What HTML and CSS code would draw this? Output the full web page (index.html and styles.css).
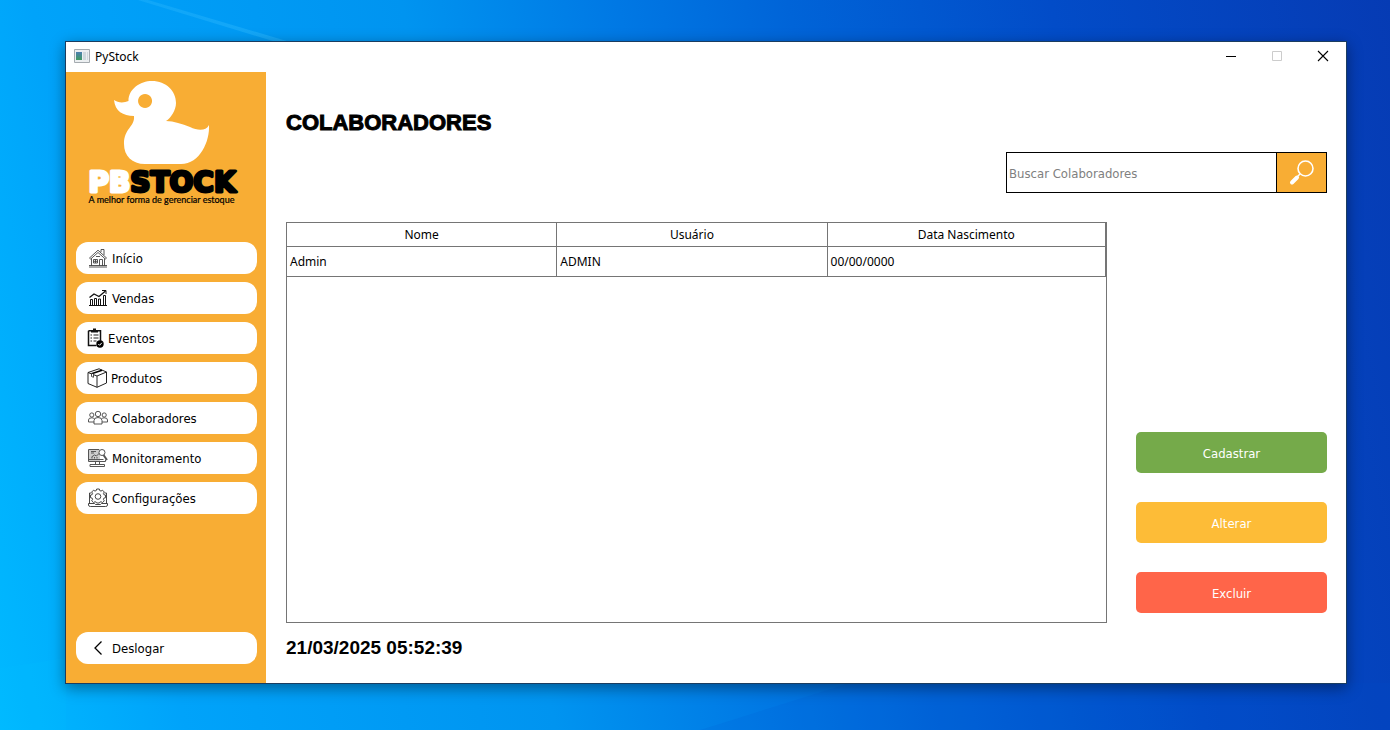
FILE: index.html
```html
<!DOCTYPE html>
<html lang="pt-BR">
<head>
<meta charset="utf-8">
<title>PyStock</title>
<link rel="stylesheet" href="styles.css">
</head>
<body class="desktop">
<svg class="wallpaper" viewBox="0 0 1390 730" preserveAspectRatio="none" aria-hidden="true">
  <defs>
    <linearGradient id="beam" x1="0" y1="0" x2="1" y2="0"><stop offset="0" stop-color="#3cc0ff" stop-opacity=".25"/><stop offset="1" stop-color="#3cc0ff" stop-opacity=".35"/></linearGradient>
  </defs>
  <path d="M138 0H148L290 42H276Z" fill="url(#beam)"/>
  <path d="M0 730V668L66 658V730Z" fill="#00c0ff" opacity=".2"/>
  <path d="M700 730L850 683H1390V730Z" fill="#0050d0" opacity=".12"/>
</svg>
<div class="window">
  <header class="titlebar">
    <svg class="app-icon" viewBox="0 0 16 14" aria-hidden="true"><defs><linearGradient id="app" x1="0" y1="0" x2="0" y2="1"><stop offset="0" stop-color="#4c7fb0"/><stop offset="1" stop-color="#3f9b62"/></linearGradient></defs><path d="M.5.5h15v13H.5z" fill="#eceff1" stroke="#a5abb0"/><path d="M2 3h6v8H2z" fill="url(#app)"/><path d="M9 3h3v8H9zM13 3h1v8h-1z" fill="#cfd8dd"/></svg>
    <span class="app-name">PyStock</span>
    <button class="win-btn" type="button" aria-label="Minimizar"><svg viewBox="0 0 12 12"><path d="M1 6.500h10" stroke="#000"/></svg></button>
    <button class="win-btn" type="button" aria-label="Maximizar" disabled><svg viewBox="0 0 12 12"><path d="M1.500 1.500h9v9h-9z" fill="none" stroke="#ccc"/></svg></button>
    <button class="win-btn" type="button" aria-label="Fechar"><svg viewBox="0 0 12 12"><path d="M1 1l10 10M11 1L1 11" stroke="#000" stroke-width="1.100"/></svg></button>
  </header>
  <div class="app">
    <aside class="sidebar">
      <div class="brand">
        <svg class="duck" viewBox="0 0 96 84" aria-hidden="true"><path fill="#fff" fill-rule="evenodd" d="M0 19C4 22 10 22 14.500 20C14.500 8 26 0 38 0C52 0 62 10 62 22C62 29 57 37 52 40C60 40 68 43 76 46C84 50 92 50 95 44C96 60 86 83 67 83L31 83C18 83 10 75 10 63C10 47 21 46 20 35C9 35 1 30 0 19ZM31 13a7 7 0 1 0 .1 0Z"/></svg>
        <svg class="wordmark" viewBox="0 0 156 30"><text class="wordmark-text" x="78" y="27" text-anchor="middle"><tspan class="wordmark-light">PB</tspan>STOCK</text></svg>
        <div class="tagline">A melhor forma de gerenciar estoque</div>
      </div>
      <nav class="menu">
        <button class="menu-item" type="button"><svg class="icon" viewBox="0 0 20 20"><g fill="none" stroke="#444" stroke-width=".9"><path d="M1.500 10L10 2.200l8.500 7.800-1.200 1L10 4.500 2.700 11zM3.500 10.500v7.500M16.500 10.500v7.500M13 4V1.500h3V7M1 17.500h18M1 19h18M11.500 18v-6.500h3V18M5.500 11.500h4v3.500h-4zM7.500 11.500V15M5.500 13.300h4M8 8.500h4"/></g></svg>Início</button>
        <button class="menu-item" type="button"><svg class="icon" viewBox="0 0 20 20"><g fill="none" stroke="#111"><path d="M1 17.500h18M2.500 17v-5.500h2V17M6.500 17v-6.500h2V17M10.500 17v-6h2v6M15.500 17V7.500h2V17"/><path d="M1.500 9.500L6 6l5 2.500 6.500-5.500" stroke-width="1.300"/><path d="M14 2.500h4V6"/></g></svg>Vendas</button>
        <button class="menu-item menu-item-small" type="button"><svg class="icon icon-clip" viewBox="0 0 17 20"><path d="M1.500 2.800h12v10M1.500 2.800v14.700h8" fill="none" stroke="#111" stroke-width="1.500"/><path d="M4 4.500V2h2V.5h3V2h2v2.500z" fill="#111"/><path d="M3.500 7h1.500M6.500 7h5M3.500 10h1.500M6.500 10h5M3.500 13h1.500M6.500 13h3" stroke="#222"/><circle cx="13" cy="16" r="3.700" fill="#000"/><path d="M11.300 16l1.300 1.300 2.200-2.500" fill="none" stroke="#fff"/></svg>Eventos</button>
        <button class="menu-item menu-item-box" type="button"><svg class="icon" viewBox="0 0 20 20"><path d="M1 4.500L12 .8l7.500 3.200v11L10 19.300 1 15.500zM1 4.500l9 3.500 9.500-4M10 8v11.300" fill="none" stroke="#222" stroke-linejoin="round"/><path d="M4.500 5.800L15 2.200" stroke="#000" stroke-width="1.600"/><path d="M4.500 5.500v3l2 .8v-3" fill="#fff" stroke="#222" stroke-width=".8"/></svg>Produtos</button>
        <button class="menu-item" type="button"><svg class="icon" viewBox="0 0 20 20"><g fill="none" stroke="#444" stroke-width=".9"><circle cx="10" cy="6" r="2.700"/><circle cx="3.800" cy="7" r="2.100"/><circle cx="16.200" cy="7" r="2.100"/><path d="M6 16v-3.500Q6 9.500 10 9.500t4 3V16zM6 14H.5v-2Q.5 9.800 3.800 9.800q1.500 0 2.700 1M14 14h5.500v-2q0-2.200-3.300-2.200-1.500 0-2.700 1"/></g></svg>Colaboradores</button>
        <button class="menu-item" type="button"><svg class="icon" viewBox="0 0 20 20"><path d="M1 1h11v12H1z" fill="#ccc"/><g fill="none" stroke="#555"><path d="M11 1.500H.5v12h17v-2M.5 11.500h15M7.500 13.500v3M11.500 13.500v3M2 16.500h14.500v2H2zM3 3.500h5M3 5h3M3.500 9l3-2 2 1 3-3M4 10.500v-1.500M6.500 10.500V9M9 10.500V9"/><circle cx="14" cy="4.500" r="3" fill="#fff"/><path d="M15.500 7l3.500 5" stroke-width="2"/></g></svg>Monitoramento</button>
        <button class="menu-item" type="button"><svg class="icon" viewBox="0 0 20 20"><g fill="none" stroke="#333" stroke-width=".9"><path d="M3.500 5H1.500v10.500M16.500 5h2V15.500M.5 15.500h6l1 1h5l1-1h6V17q0 1.500-2 1.500h-15Q.5 18.500.5 17z"/><path d="M8.700 1h2.600l.4 1.500 1.300.6 1.500-.9 1.800 1.800-.9 1.500.5 1.200 1.600.4v2.600l-1.600.4-.5 1.200.9 1.500-1.800 1.800-1.500-.9-1.300.6-.4.700H8.700l-.4-.7-1.300-.6-1.500.9-1.800-1.800.9-1.500-.5-1.200-1.600-.4V7.100l1.600-.4.5-1.200-.9-1.500 1.800-1.800 1.500.9 1.300-.6z"/><circle cx="10" cy="8.500" r="2.800"/></g></svg>Configurações</button>
      </nav>
      <button class="menu-item" type="button"><svg class="icon" viewBox="0 0 20 20"><path d="M13.500 3.500L7 10l6.500 6.500" fill="none" stroke="#000" stroke-width="1.300"/></svg>Deslogar</button>
    </aside>
    <main class="content">
      <h1 class="title">COLABORADORES</h1>
      <form class="search">
        <input class="search-input" type="text" placeholder="Buscar Colaboradores" aria-label="Buscar Colaboradores">
        <button class="search-btn" type="button" aria-label="Buscar"><svg viewBox="0 0 26 26"><circle cx="16.500" cy="8.500" r="7.500" fill="none" stroke="#fff" stroke-width="1.600"/><path d="M11 14l-3 3" stroke="#fff" stroke-width="1.500"/><path d="M8 17.500l-5 5" stroke="#fff" stroke-width="4" stroke-linecap="round"/></svg></button>
      </form>
      <div class="work">
        <div class="grid-frame">
          <table class="grid">
            <thead><tr><th class="col">Nome</th><th class="col">Usuário</th><th>Data Nascimento</th></tr></thead>
            <tbody><tr><td>Admin</td><td>ADMIN</td><td>00/00/0000</td></tr></tbody>
          </table>
        </div>
        <div class="actions">
          <button class="action action-add" type="button">Cadastrar</button>
          <button class="action action-edit" type="button">Alterar</button>
          <button class="action action-delete" type="button">Excluir</button>
        </div>
      </div>
      <time class="clock" datetime="2025-03-21T05:52:39">21/03/2025 05:52:39</time>
    </main>
  </div>
</div>
</body>
</html>
```
FILE: styles.css
```css
* { box-sizing: border-box; }

.desktop {
  position: relative;
  display: flex;
  min-height: 100vh;
  margin: 0;
  padding: 41px 43px 46px 65px;
  background: linear-gradient(78deg, #00b9ff 0%, #00a3fa 12%, #0094f0 36%, #0078e4 50%, #0064d8 61%, #024cc8 78%, #063bb4 100%);
  font-family: "DejaVu Sans Condensed", "DejaVu Sans", sans-serif;
  font-size: 12px;
  color: #000;
}

.wallpaper {
  position: absolute;
  inset: 0;
  width: 100%;
  height: 100%;
}

.window {
  position: relative;
  flex: 1;
  display: flex;
  flex-direction: column;
  border: 1px solid #1b3d60;
  background: #fff;
  box-shadow: 0 4px 14px rgba(0, 0, 0, 0.4);
}

.titlebar {
  display: flex;
  align-items: center;
  height: 30px;
  padding: 0 0 2px 8px;
  font-family: "Noto Sans", sans-serif;
}

.app-icon { width: 16px; height: 14px; }
.app-name { flex: 1; padding-left: 5px; }

.win-btn {
  display: grid;
  place-items: center;
  width: 46px;
  height: 28px;
  padding: 0;
  border: 0;
  background: none;
}
.win-btn svg { width: 12px; height: 12px; }

.app { flex: 1; display: flex; }

.sidebar {
  display: flex;
  flex-direction: column;
  width: 200px;
  padding: 9px 9px 19px 10px;
  background: #f8ad34;
}

.brand {
  display: flex;
  flex-direction: column;
  align-items: center;
  height: 161px;
  padding-right: 10px;
}
.duck { width: 96px; height: 84px; }
.wordmark { width: 156px; height: 30px; overflow: visible; }
.wordmark-text {
  font: 700 28px "DejaVu Sans", sans-serif;
  fill: #000;
  stroke: #000;
  stroke-width: 3px;
  stroke-linejoin: round;
}
.wordmark-light { fill: #fff; stroke: #fff; }
.tagline {
  font: 9px/10px Lato, sans-serif;
  -webkit-text-stroke: 0.2px #000;
  white-space: nowrap;
}

.menu { flex: 1; display: flex; flex-direction: column; gap: 8px; }

.menu-item {
  display: flex;
  align-items: center;
  gap: 4px;
  height: 32px;
  padding: 0 12px;
  border: 0;
  border-radius: 12px;
  background: #fff;
  color: #000;
  font: inherit;
  font-size: 13px;
}
.menu-item-small, .menu-item-box { padding-left: 11px; }
.icon { width: 20px; height: 20px; }
.icon-clip { width: 17px; }

.content {
  flex: 1;
  display: flex;
  flex-direction: column;
  padding: 36px 19px 23px 20px;
}

.title {
  margin: 0;
  font: 700 22px/30px "Liberation Sans", Arial, sans-serif;
  -webkit-text-stroke: 1px #000;
}

.search {
  display: flex;
  align-self: flex-end;
  width: 321px;
  height: 41px;
  margin-top: 14px;
  border: 1px solid #000;
}
.search-input {
  flex: 1;
  min-width: 0;
  padding: 2px 2px 0;
  border: 0;
  outline: 0;
  background: #fff;
  font: inherit;
  font-size: 13px;
}
.search-input::placeholder { color: #808080; }
.search-btn {
  display: grid;
  place-items: center;
  width: 50px;
  padding: 0;
  border: 0;
  border-left: 1px solid #000;
  background: #f8ad34;
}
.search-btn svg { width: 26px; height: 26px; }

.work { flex: 1; display: flex; gap: 29px; margin-top: 29px; }

.grid-frame { flex: 1; border: 1px solid #757575; }

.grid {
  width: 100%;
  border-collapse: separate;
  border-spacing: 0;
  table-layout: fixed;
  font: 12px/16px "Noto Sans", sans-serif;
}
.grid th, .grid td {
  padding: 0 3px;
  border-right: 1px solid #757575;
  border-bottom: 1px solid #757575;
  font-weight: 400;
}
.grid th { height: 24px; }
.grid td { height: 30px; text-align: left; }
.grid .col { width: 33%; }

.actions {
  display: flex;
  flex-direction: column;
  justify-content: flex-end;
  gap: 29px;
  width: 191px;
  padding-bottom: 10px;
}
.action {
  height: 41px;
  padding: 2px 0 0;
  border: 0;
  border-radius: 5px;
  color: #fff;
  font: inherit;
  font-size: 13px;
}
.action-add { background: #75aa4a; }
.action-edit { background: #fdbc37; }
.action-delete { background: #ff6549; }

.clock {
  margin-top: 13px;
  font: 700 19px/24px "Liberation Sans", Arial, sans-serif;
}
```
